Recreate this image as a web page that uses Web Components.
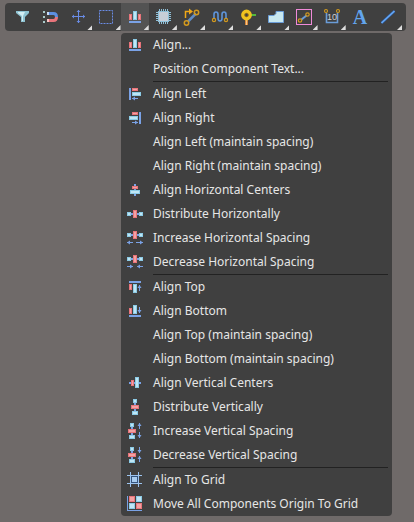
<!DOCTYPE html>
<html lang="en">
<head>
<meta charset="utf-8">
<title>Alignment tools</title>
<style>
  body { margin: 0; min-height: 100vh; background: #6f6a69; color: #e6e6e6; font: 12px/24px "Noto Sans", "Noto Sans CJK SC", sans-serif; }
</style>
</head>
<body>
<tool-bar>
  <tool-button icon="filter" label="Selection filter"></tool-button>
  <tool-button icon="magnet" label="Snapping"></tool-button>
  <tool-button icon="move" label="Move" more></tool-button>
  <tool-button icon="select" label="Select area" more></tool-button>
  <tool-button icon="alignbar" label="Align" more active></tool-button>
  <tool-button icon="chip" label="Place component" more></tool-button>
  <tool-button icon="route" label="Route" more></tool-button>
  <tool-button icon="tune" label="Length tuning" more></tool-button>
  <tool-button icon="via" label="Place via" more></tool-button>
  <tool-button icon="polygon" label="Place polygon" more></tool-button>
  <tool-button icon="room" label="Place room" more></tool-button>
  <tool-button icon="dimension" label="Place dimension" more></tool-button>
  <tool-button icon="text" label="Place text"></tool-button>
  <tool-button icon="line" label="Place line" more></tool-button>
</tool-bar>
<drop-menu>
  <menu-row icon="align">Align...</menu-row>
  <menu-row>Position Component Text...</menu-row>
  <menu-line></menu-line>
  <menu-row icon="left">Align Left</menu-row>
  <menu-row icon="right">Align Right</menu-row>
  <menu-row>Align Left (maintain spacing)</menu-row>
  <menu-row>Align Right (maintain spacing)</menu-row>
  <menu-row icon="hcenter">Align Horizontal Centers</menu-row>
  <menu-row icon="hdist">Distribute Horizontally</menu-row>
  <menu-row icon="hinc">Increase Horizontal Spacing</menu-row>
  <menu-row icon="hdec">Decrease Horizontal Spacing</menu-row>
  <menu-line></menu-line>
  <menu-row icon="top">Align Top</menu-row>
  <menu-row icon="bottom">Align Bottom</menu-row>
  <menu-row>Align Top (maintain spacing)</menu-row>
  <menu-row>Align Bottom (maintain spacing)</menu-row>
  <menu-row icon="vcenter">Align Vertical Centers</menu-row>
  <menu-row icon="vdist">Distribute Vertically</menu-row>
  <menu-row icon="vinc">Increase Vertical Spacing</menu-row>
  <menu-row icon="vdec">Decrease Vertical Spacing</menu-row>
  <menu-line></menu-line>
  <menu-row icon="grid">Align To Grid</menu-row>
  <menu-row icon="origin">Move All Components Origin To Grid</menu-row>
</drop-menu>

<script>
const BLUE = '#7aa2e6', RED = '#e8747a', PINK = '#f2a2a2', SKY = '#8ccbe6', PALE = '#bfe6f4', GOLD = '#d39a1e';
const bar = (x, y, w, h, c = BLUE) => `<rect x="${x}" y="${y}" width="${w}" height="${h}" fill="${c}"/>`;
const box = (x, y, w, h, edge, core) => bar(x, y, w, h, edge) + bar(x + 1, y + 1, w - 2, h - 2, core);
const red = (x, y, w, h) => box(x, y, w, h, RED, PINK);
const sky = (x, y, w, h) => box(x, y, w, h, SKY, PALE);
const stroke = (d, c = BLUE, w = 1) => `<path d="${d}" fill="none" stroke="${c}" stroke-width="${w}"/>`;
const fill = (d, c = BLUE) => `<path d="${d}" fill="${c}"/>`;
const ring = (x, y, r = 2, w = 1.3, c = GOLD) => `<circle cx="${x}" cy="${y}" r="${r}" fill="none" stroke="${c}" stroke-width="${w}"/>`;
const arrowL = (x, y, w) => bar(x, y, w, 1) + fill(`M${x} ${y + .5}l3-2v4z`);
const arrowR = (x, y, w) => bar(x, y, w, 1) + fill(`M${x + w} ${y + .5}l-3-2v4z`);
const arrowU = (x, y, h) => bar(x, y, 1, h) + fill(`M${x + .5} ${y}l-2 3h4z`);
const arrowD = (x, y, h) => bar(x, y, 1, h) + fill(`M${x + .5} ${y + h}l-2-3h4z`);
const align = red(3, 6, 3, 6) + sky(7, 3, 4, 9) + red(12, 6, 3, 6) + bar(3, 13, 12, 2);
const rowOf = y => bar(2, y + 3, 14, 2) + sky(1, y + 2, 4, 4) + red(7, y, 4, 8) + sky(13, y + 2, 4, 4);
const stackOf = x => bar(x + 3, 2, 2, 14) + sky(x + 2, 1, 4, 4) + red(x, 7, 8, 4) + sky(x + 1, 13, 6, 4);
const pins = [6, 8, 10, 12, 14].map(p => bar(p, 2, 1, 15, '#8fc0d8') + bar(3, p - 1, 15, 1, '#8fc0d8')).join('');

const MENU = {
  align,
  left: bar(3, 3, 2, 12) + red(6, 3, 6, 3) + sky(6, 7, 9, 4) + arrowL(6, 13, 6),
  right: bar(13, 3, 2, 12) + red(6, 3, 6, 3) + sky(3, 7, 9, 4) + arrowR(6, 13, 6),
  hcenter: bar(8, 3, 2, 12) + red(6, 5, 6, 3) + sky(4, 9, 10, 4),
  hdist: rowOf(5),
  hinc: rowOf(2) + arrowL(1, 13, 6) + arrowR(10, 13, 7),
  hdec: rowOf(2) + arrowR(1, 13, 6) + arrowL(11, 13, 6),
  top: bar(3, 3, 12, 2) + red(3, 6, 3, 6) + sky(7, 6, 4, 9) + arrowU(13, 7, 6),
  bottom: bar(3, 13, 12, 2) + red(3, 6, 3, 6) + sky(7, 3, 4, 9) + arrowD(13, 5, 6),
  vcenter: bar(3, 8, 12, 2) + red(5, 6, 3, 6) + sky(9, 3, 4, 11),
  vdist: stackOf(5),
  vinc: stackOf(2) + arrowU(13, 1, 6) + arrowD(13, 10, 6),
  vdec: stackOf(2) + arrowD(13, 1, 6) + arrowU(13, 10, 6),
  grid: [4, 12].map(p => bar(p, 1, 1, 15, '#9cc4f0') + bar(1, p, 15, 1, '#9cc4f0')).join('') + box(5, 5, 7, 7, '#35557e', '#a9cdf0'),
  origin: bar(1, 1, 1, 15) + bar(1, 15, 15, 1) + red(3, 1, 6, 6) + sky(10, 1, 6, 6) + sky(3, 8, 6, 6) + red(10, 8, 6, 6)
};
const TOOLS = {
  filter: fill('M4 4h13v2l-4 4v5h-4v-5l-5-4z', '#8fc3d2') + fill('M6 5h7l-2 4v5h-1v-5l-4-3z', '#d4eef3'),
  magnet: [4, 9, 14].map(y => bar(3, y, 2, 2, '#a9c9c9')).join('') + stroke('M7 6.500h6.500q3 0 3 3.500', '#5c8fe0', 3) + stroke('M7 13.500h6.500q3 0 3-3.500', '#e8747a', 3) + bar(7, 5, 2, 3, '#c9dcf6') + bar(7, 12, 2, 3, '#f7c3c2'),
  move: stroke('M4 9.500h13M10.500 3v13', '#6a8ce6') + fill('M4 9.500l2-2v4zM17 9.500l-2-2v4zM10.500 3l-2 2h4zM10.500 16l-2-2h4z', '#6a8ce6'),
  select: '<rect x="3.500" y="3.500" width="13" height="13" fill="none" stroke="#6a8ce6" stroke-dasharray="2 1"/>',
  alignbar: `<g transform="translate(1 1)">${align}</g>`,
  chip: pins + box(5, 4, 11, 11, '#8fc0d8', '#c7ced8'),
  route: stroke('M7 14.500l8-8', '#5f8cc4', 2.5) + ring(5.5, 16, 2.2, 1.5) + ring(15.5, 5.5, 2.2, 1.5) + stroke('M4.500 11V4.500H9', '#f0a818', 1.5) + fill('M8 1.500l4 3-4 3z', '#f0a818'),
  tune: stroke('M5 11V7.500Q5 5 7 5T9 7.500V11Q9 14 11 14T13 11V7.500Q13 5 15 5T17 7.500V11', '#5f94d8', 1.6) + ring(5, 13, 1.6, 1.2) + ring(17, 13, 1.6, 1.2),
  via: bar(8, 12, 3, 6, '#d8863a') + bar(9, 12, 1, 6, '#f6c68a') + bar(13, 7, 6, 2, '#55b83c') + ring(9.5, 8, 3.7, 3.4, '#efc31f') + ring(9.5, 8, 1.8, .8, '#a87c10'),
  polygon: '<path d="M3.500 15.500v-7h5.500l2-2v-2h7.500v11z" fill="#c8e8f0" stroke="#6a9cd8"/>',
  room: '<rect x="3.500" y="2.500" width="15" height="15" fill="none" stroke="#f08ad8"/>' + stroke('M8.500 12.500l5-4', '#6a9cd8', 2) + ring(7, 13.5, 1.7, 1.2) + ring(14.5, 7.5, 1.7, 1.2),
  dimension: stroke('M4.500 6v9.500h11V6', '#6a9cd8', 1.6) + ring(4, 4, 1.5, 1.1) + ring(16, 4, 1.5, 1.1) + '<text x="10" y="13" text-anchor="middle" font-family="Liberation Sans Narrow, Liberation Sans, sans-serif" font-size="9" fill="#d0d0d0">10</text>',
  text: '<text x="10" y="17" text-anchor="middle" font-family="Liberation Serif, serif" font-weight="bold" font-size="20" fill="#62a4ec">A</text>',
  line: stroke('M3.500 16l13-12', '#2d5fa8', 2.4) + stroke('M3.500 16l13-12', '#6aaaf4', 1.5)
};

function define(name, html, setup) {
  const template = document.createElement('template');
  template.innerHTML = html;
  customElements.define(name, class extends HTMLElement {
    constructor() {
      super();
      this.attachShadow({ mode: 'open' }).append(template.content.cloneNode(true));
    }
    connectedCallback() { if (setup) setup(this, this.shadowRoot); }
  });
}

define('tool-bar', `<style>
  :host { display: block; padding: 3px 8px 2px 5px; }
  nav { display: grid; grid-auto-flow: column; grid-auto-columns: minmax(0, 1fr); height: 28px; padding: 0 4px 0 3px; background: #404040; border-radius: 4px; }
</style><nav aria-label="Tools"><slot></slot></nav>`);

define('tool-button', `<style>
  :host { display: block; position: relative; }
  button { display: grid; place-items: center; width: 100%; height: 28px; margin: 0; padding: 0; border: 0; background: transparent; color: inherit; }
  :host([active]) button { background: #535353; }
  svg { display: block; width: 20px; height: 20px; }
  :host([more])::after { content: ""; position: absolute; right: 0; top: 22px; width: 5px; height: 5px; background: #dedede; clip-path: polygon(100% 0, 100% 100%, 0 100%); }
</style><button type="button"><svg viewBox="0 0 20 20" aria-hidden="true"></svg></button>`, (host, root) => {
  root.querySelector('svg').innerHTML = TOOLS[host.getAttribute('icon')];
  root.querySelector('button').setAttribute('aria-label', host.getAttribute('label'));
});

/* The left edge follows the fifth of the bar's fourteen equal cells. */
define('drop-menu', `<style>
  :host { display: block; width: max-content; min-width: 271px; margin-left: round(calc(8px + (100% - 20px) * 4 / 14), 1px); background: #404040; border-radius: 4px; }
</style><div role="menu"><slot></slot></div>`);

define('menu-row', `<style>
  :host { display: block; }
  button { display: flex; align-items: center; gap: 9px; width: 100%; height: 24px; margin: 0; padding: 0 16px 0 5px; border: 0; background: transparent; color: inherit; font: inherit; text-align: left; white-space: nowrap; }
  svg { flex: none; width: 18px; height: 18px; }
</style><button type="button" role="menuitem"><svg viewBox="0 0 18 18" aria-hidden="true"></svg><span><slot></slot></span></button>`, (host, root) => {
  root.querySelector('svg').innerHTML = MENU[host.getAttribute('icon')] || '';
});

define('menu-line', `<style>
  :host { display: block; height: 1px; margin: 0 4px 0 32px; background: #222; }
</style>`);
</script>
</body>
</html>
